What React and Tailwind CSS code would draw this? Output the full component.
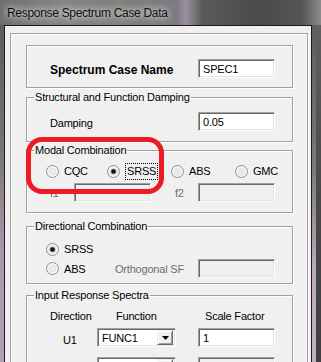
const font = { fontFamily: '"Liberation Sans", Arial, sans-serif' };

const sunken =
  "border border-t-[#a0a0a0] border-l-[#a0a0a0] border-b-white border-r-white shadow-[inset_1px_1px_0_#696969,inset_-1px_-1px_0_#e3e3e3]";

const group = "border border-[#a0a0a0] shadow-[1px_1px_0_#fff,inset_1px_1px_0_#fff]";

const Radio = ({ checked }) => (
  <svg width="13" height="13" viewBox="0 0 13 13" className="shrink-0">
    <circle cx="6.5" cy="6.5" r="6" fill="#f6f6f6" stroke="#8c8e90" />
    <circle cx="6.5" cy="6.5" r="4.5" fill="#e8e8e8" stroke="#f4f4f4" />
    {checked && (
      <>
        <circle cx="6.5" cy="6.5" r="2.8" fill="#7a7a7a" />
        <circle cx="6.5" cy="6.5" r="2" fill="#111" />
      </>
    )}
  </svg>
);

const RadioItem = ({ checked, label, focus, className = "" }) => (
  <div className={`flex items-center gap-[5px] ${className}`}>
    <Radio checked={checked} />
    {focus ? (
      <span className="border border-dotted border-black px-[1px] leading-[15px]">{label}</span>
    ) : (
      <span>{label}</span>
    )}
  </div>
);

const Input = ({ value = "", disabled, className = "" }) => (
  <div
    className={`h-[19px] w-[77px] pl-[4px] flex items-center ${sunken} ${
      disabled ? "bg-[#f0f0f0]" : "bg-white"
    } ${className}`}
  >
    {value}
  </div>
);

const Combo = ({ value = "" }) => (
  <div className={`h-[19px] w-[79px] flex items-center bg-white ${sunken} pl-[4px] pr-[2px]`}>
    <span className="flex-1">{value}</span>
    <div className="w-[16px] h-[15px] bg-[#f0f0f0] border border-t-[#f0f0f0] border-l-[#f0f0f0] border-b-[#696969] border-r-[#696969] shadow-[inset_1px_1px_0_#fff,inset_-1px_-1px_0_#a0a0a0] flex items-center justify-center">
      <svg width="7" height="4" viewBox="0 0 7 4">
        <path d="M0 0h7L3.5 4z" fill="#000" />
      </svg>
    </div>
  </div>
);

const Group = ({ title, className = "", children }) => (
  <fieldset className={`${group} ${className}`}>
    <legend className="ml-[7px] px-[1px] leading-[14px]">{title}</legend>
    {children}
  </fieldset>
);

export default function App() {
  return (
    <div
      className="relative w-[321px] h-[362px] overflow-hidden flex flex-col text-[11px] tracking-[-0.2px] leading-[14px] text-black"
      style={font}
    >
      {/* title bar */}
      <div className="h-[25px] shrink-0 flex items-center pl-[7px] bg-[linear-gradient(90deg,#6e6e6e_0%,#858585_18%,#7c807a_40%,#7e7a80_55%,#9a90a0_58%,#5a5a5a_63%,#4a4a4a_80%,#565656_94%,#8a8a8a_100%)]">
        <span className="text-[12px] tracking-[-0.3px] text-[#111] [text-shadow:0_0_6px_rgba(255,255,255,0.9),0_0_10px_rgba(255,255,255,0.6)]">
          Response Spectrum Case Data
        </span>
      </div>

      <div className="flex flex-1">
        <div className="w-[4px] bg-[linear-gradient(180deg,#5c5c5c_0%,#7a727a_30%,#a898a8_55%,#b6a6b6_100%)]" />

        {/* client */}
        <div className="flex-1 bg-[#f0f0f0] border-l border-t border-r border-[#1a1a1a]">
          <div className={`ml-[5px] mr-[3px] mt-[7px] h-[400px] pl-[15px] pr-[14px] pt-[11px] ${group}`}>
            {/* Spectrum case name */}
            <div className={`${group} h-[43px] flex items-start pl-[23px] pr-[17px] pt-[13px]`}>
              <span className="mt-[4px] text-[12px] font-bold tracking-normal">Spectrum Case Name</span>
              <Input value="SPEC1" className="ml-auto" />
            </div>

            <Group title="Structural and Function Damping" className="mt-[2px]">
              <div className="flex items-center pl-[23px] pr-[17px] pt-[8px] pb-[10px]">
                <span className="mt-[2px]">Damping</span>
                <Input value="0.05" className="ml-auto" />
              </div>
            </Group>

            <Group title="Modal Combination" className="mt-[1px]">
              <div className="pt-[7px] pb-[10px]">
                <div className="h-[14px] flex items-center pl-[19px]">
                  <RadioItem label="CQC" className="w-[61px]" />
                  <RadioItem label="SRSS" checked focus className="w-[64px]" />
                  <RadioItem label="ABS" className="w-[64px]" />
                  <RadioItem label="GMC" />
                </div>
                <div className="mt-[5px] flex items-center pl-[23px] text-[#6d6d6d]">
                  <span className="w-[24px]">f1</span>
                  <Input disabled />
                  <span className="ml-[24px] w-[23px]">f2</span>
                  <Input disabled />
                </div>
              </div>
            </Group>

            <Group title="Directional Combination" className="mt-[6px]">
              <div className="pt-[9px] pb-[5px] pl-[19px]">
                <div className="h-[14px] flex items-center">
                  <RadioItem label="SRSS" checked />
                </div>
                <div className="mt-[3px] flex items-center">
                  <RadioItem label="ABS" className="w-[69px]" />
                  <span className="w-[83px] text-[#6d6d6d]">Orthogonal SF</span>
                  <Input disabled />
                </div>
              </div>
            </Group>

            <Group title="Input Response Spectra" className="mt-[4px]">
              <div className="pt-[7px] pb-[10px]">
                <div className="h-[14px] flex items-center pl-[23px]">
                  <span className="w-[66px]">Direction</span>
                  <span className="w-[89px]">Function</span>
                  <span>Scale Factor</span>
                </div>
                <div className="mt-[5px] flex items-center pl-[36px]">
                  <span className="w-[34px] mt-[4px]">U1</span>
                  <Combo value="FUNC1" />
                  <Input value="1" className="ml-[22px]" />
                </div>
                <div className="mt-[10px] flex items-center pl-[36px]">
                  <span className="w-[34px]" />
                  <Combo />
                  <Input disabled className="ml-[22px]" />
                </div>
              </div>
            </Group>
          </div>
        </div>

        <div className="w-[9px] flex">
          <div className="w-[4px] bg-[linear-gradient(180deg,#5e5e5e_0%,#7e767e_35%,#bcaabc_60%,#c4b4c4_100%)]" />
          <div className="flex-1 bg-[linear-gradient(180deg,#606060_0%,#4a4a4a_40%,#3a3a3a_100%)]" />
        </div>
      </div>

      {/* red highlight drawn over the dialog */}
      <div className="absolute left-[26px] top-[137px] w-[138px] h-[57px] border-[5px] border-[#ed1c24] rounded-[16px] pointer-events-none" />
    </div>
  );
}
